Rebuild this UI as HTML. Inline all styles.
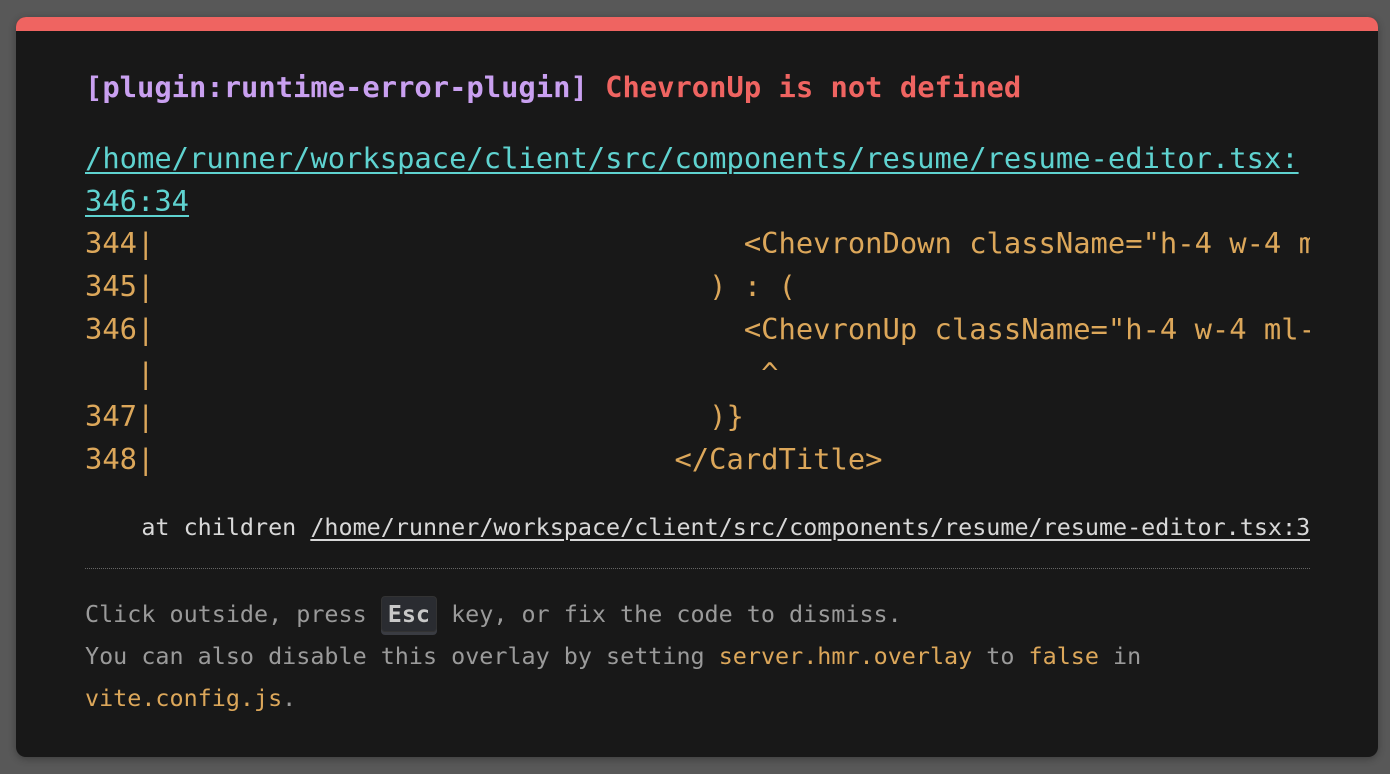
<!DOCTYPE html>
<html><head><meta charset="utf-8"><style>
html,body{margin:0;padding:0;width:1390px;height:774px;background:#585858;overflow:hidden}
.win{position:absolute;left:16px;top:17px;width:1362px;height:740px;background:#181818;border-radius:10px;overflow:hidden;box-shadow:0 2px 8px rgba(0,0,0,.3)}
.bar{position:absolute;left:0;top:0;right:0;height:14px;background:#ef6461}
.t{position:absolute;left:69px;white-space:pre;font-family:"DejaVu Sans Mono","Liberation Mono",monospace;font-size:28.8px;line-height:43px}
.title{top:49px;font-weight:bold}
.p{color:#c9a0f0}.r{color:#ef6461}
.link{color:#5fd3d0;text-decoration:underline;text-underline-offset:4px;text-decoration-thickness:2px}
.code{top:205px;color:#dca75a;width:1225px;overflow:hidden;line-height:43.2px}
.sm{font-size:23.4px;line-height:42px}
.at{top:489px;color:#d8d8d8;width:1225px;overflow:hidden}
.at u{text-decoration-thickness:2px;text-underline-offset:4px}
.hr{position:absolute;left:69px;top:551px;width:1225px;border-top:1.5px dotted #666}
.f{color:#9a9a9a;top:576px}
.y{color:#dca75a}
.kbd{display:inline-block;background:#2a2c31;color:#c8c8c8;font-weight:bold;border-radius:4px;padding:0 6px;line-height:34px;box-shadow:0 3px 0 #3a3c42;border:1px solid #333}
</style></head><body>
<div class="win"><div class="bar"></div>
<div class="t title"><span class="p">[plugin:runtime-error-plugin]</span> <span class="r">ChevronUp is not defined</span></div>
<div class="t link" style="top:120px">/home/runner/workspace/client/src/components/resume/resume-editor.tsx:</div>
<div class="t link" style="top:163px">346:34</div>
<div class="t code">344|                                  &lt;ChevronDown className="h-4 w-4 ml-2" /&gt;
345|                                ) : (
346|                                  &lt;ChevronUp className="h-4 w-4 ml-2" /&gt;
   |                                   ^
347|                                )}
348|                              &lt;/CardTitle&gt;</div>
<div class="t sm at">    at children <u>/home/runner/workspace/client/src/components/resume/resume-editor.tsx:346:34</u></div>
<div class="hr"></div>
<div class="t sm f">Click outside, press <span class="kbd">Esc</span> key, or fix the code to dismiss.
You can also disable this overlay by setting <span class="y">server.hmr.overlay</span> to <span class="y">false</span> in
<span class="y">vite.config.js</span>.</div>
</div>
</body></html>
